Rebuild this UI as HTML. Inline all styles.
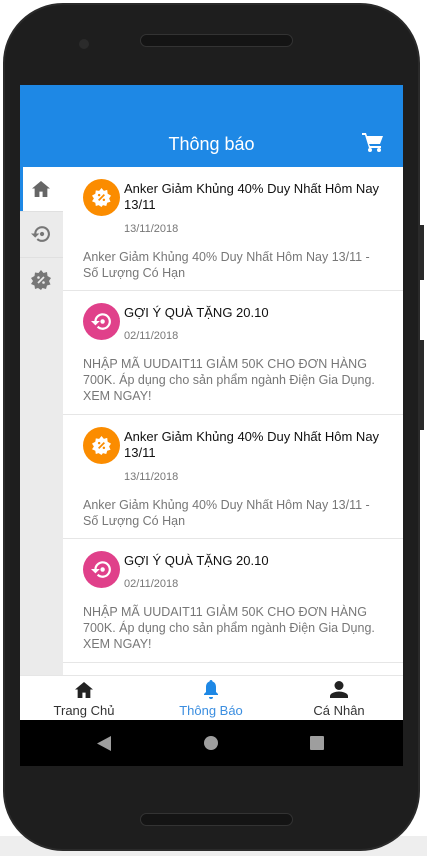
<!DOCTYPE html>
<html><head><meta charset="utf-8"><style>
*{margin:0;padding:0;box-sizing:border-box}
body{width:427px;height:856px;background:#fff;position:relative;overflow:hidden;font-family:"Liberation Sans",sans-serif}
.bottombg{position:absolute;left:0;top:836px;width:427px;height:20px;background:#eee}
.phone{position:absolute;left:3px;top:3px;width:417px;height:848px;background:#1e1e1e;border-radius:60px;border:2px solid #2a2a2a}
.speaker{position:absolute;left:135px;width:153px;height:13px;border-radius:7px;background:#141414;border:1px solid #333}
.cam{position:absolute;left:74px;top:34px;width:10px;height:10px;border-radius:50%;background:#2b2b2b}
.btn{position:absolute;left:420px;width:4px;background:#2a2a2a}
.screen{position:absolute;left:20px;top:85px;width:383px;height:681px;background:#fff;overflow:hidden}
.header{position:absolute;left:0;top:0;width:383px;height:82px;background:#1e88e5}
.header .t{position:absolute;left:0;width:383px;top:49px;text-align:center;color:#fff;font-size:18px}
.side{position:absolute;left:0;top:82px;width:43px;height:508px;background:#ebebeb}
.side .act{position:absolute;left:0;top:0;width:43px;height:44px;background:#fff;border-left:3px solid #1e88e5}
.side .sep{position:absolute;left:0;width:43px;height:1px;background:#e0e0e0}
.item{position:absolute;left:43px;width:340px;border-bottom:1px solid #e6e6e6;background:#fff}
.ic{position:absolute;left:20px;top:12px;width:37px;height:37px;border-radius:50%}
.ti{position:absolute;left:61px;top:14px;font-size:13px;color:#111;line-height:16px;width:270px}
.dt{position:absolute;left:61px;font-size:11px;color:#777}
.ds{position:absolute;left:20px;font-size:12.5px;color:#777;line-height:16px;width:300px}
.nav{position:absolute;left:0;top:590px;width:383px;height:45px;background:#fff;border-top:1px solid #e6e6e6}
.nav div{position:absolute;top:27px;font-size:13px;color:#333;width:128px;text-align:center}
.sys{position:absolute;left:0;top:635px;width:383px;height:46px;background:#000}
</style></head><body>
<div class="bottombg"></div>
<div class="phone">
<div class="cam"></div>
<div class="speaker" style="top:29px"></div>
<div class="speaker" style="top:808px"></div>
</div>
<div class="btn" style="top:225px;height:55px"></div>
<div class="btn" style="top:340px;height:90px"></div>
<div class="screen">
<div class="header"><div class="t">Thông báo</div>
<svg style="position:absolute;left:342px;top:47px" width="22" height="20" viewBox="0 0 22 20"><path d="M0 1h4l1 3h16l-3 8H7l1 2h11v2H7L3 3H0z" fill="#fff"/><circle cx="8" cy="18" r="2" fill="#fff"/><circle cx="17" cy="18" r="2" fill="#fff"/></svg>
</div>
<div class="side">
<div class="act"></div>
<svg style="position:absolute;left:12px;top:14px" width="18" height="16" viewBox="0 0 17 15"><path d="M8.5 0L0 7h2.5v8h4.5v-5h3v5h4.5V7H17z" fill="#666"/></svg>
<div class="sep" style="top:44px"></div>
<svg style="position:absolute;left:11px;top:58px" width="20" height="18" viewBox="0 0 19 17"><path d="M4 8.5a6.5 6.5 0 1 1 2 4.7" stroke="#777" stroke-width="2" fill="none"/><path d="M0 8h8l-4 4z" fill="#777"/><circle cx="10.5" cy="8.5" r="2" fill="#777"/></svg>
<div class="sep" style="top:90px"></div>
<svg style="position:absolute;left:11px;top:103px" width="20" height="20" viewBox="0 0 20 20"><polygon points="10,0 12.5,3 16,2 16.5,6 20,8 18,11 19.5,14.5 16,15.5 15,19 11.5,18 10,20 7,18 4,19 3.5,15.5 0,14 2,11 0,8 3.5,6 4,2.5 7.5,3" fill="#777"/><path d="M7 13l6-6" stroke="#ebebeb" stroke-width="1.8"/><circle cx="7.5" cy="7.5" r="1.3" fill="#ebebeb"/><circle cx="12.5" cy="12.5" r="1.3" fill="#ebebeb"/></svg>
</div>

<div class="item" style="top:82px;height:124px">
<div class="ic" style="background:#fb8c00"><svg style="position:absolute;left:9px;top:9px" width="19" height="19" viewBox="0 0 20 20"><polygon points="10,0 12.5,3 16,2 16.5,6 20,8 18,11 19.5,14.5 16,15.5 15,19 11.5,18 10,20 7,18 4,19 3.5,15.5 0,14 2,11 0,8 3.5,6 4,2.5 7.5,3" fill="#fff"/><path d="M7 13l6-6" stroke="#fb8c00" stroke-width="1.8"/><circle cx="7.5" cy="7.5" r="1.3" fill="#fb8c00"/><circle cx="12.5" cy="12.5" r="1.3" fill="#fb8c00"/></svg></div>
<div class="ti">Anker Giảm Khủng 40% Duy Nhất Hôm Nay 13/11</div>
<div class="dt" style="top:56px">13/11/2018</div>
<div class="ds" style="top:82px">Anker Giảm Khủng 40% Duy Nhất Hôm Nay 13/11 - Số Lượng Có Hạn</div>
</div>
<div class="item" style="top:206px;height:124px">
<div class="ic" style="background:#e0408a"><svg style="position:absolute;left:8px;top:9px" width="21" height="19" viewBox="0 0 19 17"><path d="M4 8.5a6.5 6.5 0 1 1 2 4.7" stroke="#fff" stroke-width="2" fill="none"/><path d="M0 8h8l-4 4z" fill="#fff"/><circle cx="10.5" cy="8.5" r="2" fill="#fff"/></svg></div>
<div class="ti" style="top:14px">GỢI Ý QUÀ TẶNG 20.10</div>
<div class="dt" style="top:39px">02/11/2018</div>
<div class="ds" style="top:65px">NHẬP MÃ UUDAIT11 GIẢM 50K CHO ĐƠN HÀNG 700K. Áp dụng cho sản phẩm ngành Điện Gia Dụng. XEM NGAY!</div>
</div>
<div class="item" style="top:330px;height:124px">
<div class="ic" style="background:#fb8c00"><svg style="position:absolute;left:9px;top:9px" width="19" height="19" viewBox="0 0 20 20"><polygon points="10,0 12.5,3 16,2 16.5,6 20,8 18,11 19.5,14.5 16,15.5 15,19 11.5,18 10,20 7,18 4,19 3.5,15.5 0,14 2,11 0,8 3.5,6 4,2.5 7.5,3" fill="#fff"/><path d="M7 13l6-6" stroke="#fb8c00" stroke-width="1.8"/><circle cx="7.5" cy="7.5" r="1.3" fill="#fb8c00"/><circle cx="12.5" cy="12.5" r="1.3" fill="#fb8c00"/></svg></div>
<div class="ti">Anker Giảm Khủng 40% Duy Nhất Hôm Nay 13/11</div>
<div class="dt" style="top:56px">13/11/2018</div>
<div class="ds" style="top:82px">Anker Giảm Khủng 40% Duy Nhất Hôm Nay 13/11 - Số Lượng Có Hạn</div>
</div>
<div class="item" style="top:454px;height:124px">
<div class="ic" style="background:#e0408a"><svg style="position:absolute;left:8px;top:9px" width="21" height="19" viewBox="0 0 19 17"><path d="M4 8.5a6.5 6.5 0 1 1 2 4.7" stroke="#fff" stroke-width="2" fill="none"/><path d="M0 8h8l-4 4z" fill="#fff"/><circle cx="10.5" cy="8.5" r="2" fill="#fff"/></svg></div>
<div class="ti" style="top:14px">GỢI Ý QUÀ TẶNG 20.10</div>
<div class="dt" style="top:39px">02/11/2018</div>
<div class="ds" style="top:65px">NHẬP MÃ UUDAIT11 GIẢM 50K CHO ĐƠN HÀNG 700K. Áp dụng cho sản phẩm ngành Điện Gia Dụng. XEM NGAY!</div>
</div>

<div class="nav">
<svg style="position:absolute;left:55px;top:6px" width="18" height="16" viewBox="0 0 17 15"><path d="M8.5 0L0 7h2.5v8h4.5v-5h3v5h4.5V7H17z" fill="#222"/></svg>
<svg style="position:absolute;left:183px;top:4px" width="16" height="19" viewBox="0 0 16 19"><path d="M8 0c1 0 1.5.8 1.5 1.5C12 2.3 13 4.5 13 7v5l2 2v1H1v-1l2-2V7c0-2.5 1-4.7 3.5-5.5C6.5.8 7 0 8 0z" fill="#1e88e5"/><path d="M6 17h4a2 2 0 0 1-4 0z" fill="#1e88e5"/></svg>
<svg style="position:absolute;left:310px;top:5px" width="18" height="17" viewBox="0 0 18 17"><circle cx="9" cy="4.5" r="4.5" fill="#222"/><path d="M0 17v-2c0-3 6-4.5 9-4.5s9 1.5 9 4.5v2z" fill="#222"/></svg>
<div style="left:0">Trang Chủ</div>
<div style="left:127px;color:#3b8ee0">Thông Báo</div>
<div style="left:255px">Cá Nhân</div>
</div>
<div class="sys">
<svg style="position:absolute;left:77px;top:16px" width="14" height="15"><path d="M14 0v15L0 7.5z" fill="#9e9e9e"/></svg>
<div style="position:absolute;left:184px;top:16px;width:14px;height:14px;border-radius:50%;background:#9e9e9e"></div>
<div style="position:absolute;left:290px;top:16px;width:14px;height:14px;border-radius:1px;background:#9e9e9e"></div>
</div>
</div>
</body></html>
